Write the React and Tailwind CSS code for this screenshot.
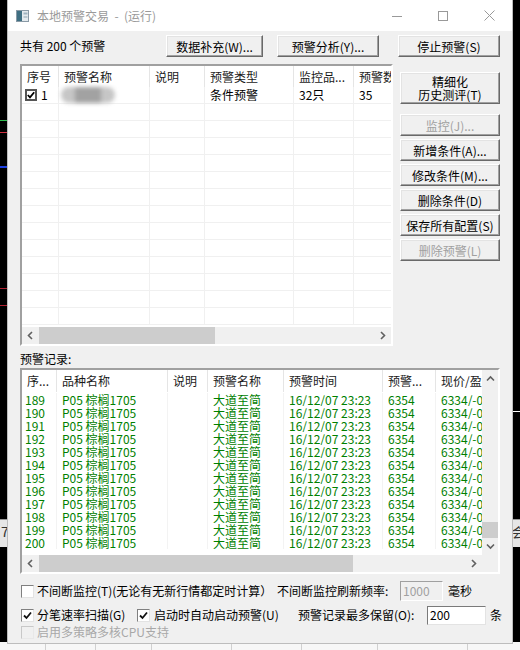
import React from 'react';
import clsx from 'clsx';

const topCols = [
  { label: '序号', w: 'w-[37px]' },
  { label: '预警名称', w: 'w-[91px]' },
  { label: '说明', w: 'w-[55px]' },
  { label: '预警类型', w: 'w-[89px]' },
  { label: '监控品...', w: 'w-[60px]' },
  { label: '预警数量', w: 'w-[60px]' },
];

const logCols = [
  { label: '序...', w: 'w-[35px]', pad: 'pl-[3px]' },
  { label: '品种名称', w: 'w-[111px]', pad: 'pl-[5px]' },
  { label: '说明', w: 'w-[40px]', pad: 'pl-[5px]' },
  { label: '预警名称', w: 'w-[76px]', pad: 'pl-[5px]' },
  { label: '预警时间', w: 'w-[99px]', pad: 'pl-[5px]' },
  { label: '预警...', w: 'w-[53px]', pad: 'pl-[5px]' },
  { label: '现价/盈亏', w: 'w-[80px]', pad: 'pl-[5px]' },
];

const logRows = Array.from({ length: 12 }, (_, i) => [
  String(189 + i),
  'P05 棕榈1705',
  '',
  '大道至简',
  '16/12/07 23:23',
  '6354',
  '6334/-0.31%',
]);

const Arrow = ({ dir }) => {
  const d = {
    left: 'M5 1L1.5 4.5L5 8',
    right: 'M2 1L5.5 4.5L2 8',
    up: 'M1 5.5L4.5 2L8 5.5',
    down: 'M1 1.5L4.5 5L8 1.5',
  }[dir];
  const flat = dir === 'left' || dir === 'right';
  return (
    <svg width={flat ? 7 : 9} height={flat ? 9 : 7} viewBox={flat ? '0 0 7 9' : '0 0 9 7'}>
      <path d={d} fill="none" stroke="#606060" strokeWidth="1.6" />
    </svg>
  );
};

const Btn = ({ children, disabled, className }) => (
  <button
    type="button"
    className={clsx(
      'flex flex-col items-center justify-center shrink-0 bg-[#f0f0f0] text-[12px] leading-[13px] whitespace-nowrap',
      'border border-t-white border-l-white border-r-[#696969] border-b-[#696969] shadow-[inset_-1px_-1px_0_#a0a0a0,inset_1px_1px_0_#e3e3e3]',
      disabled ? 'text-[#a0a0a0]' : 'text-black',
      className
    )}
  >
    {children}
  </button>
);

const Check = ({ checked, disabled }) => (
  <span
    className={clsx(
      'w-[13px] h-[13px] shrink-0 flex items-center justify-center border',
      disabled
        ? 'bg-[#f0f0f0] border-t-[#c8c8c8] border-l-[#c8c8c8] border-r-[#e8e8e8] border-b-[#e8e8e8]'
        : 'bg-white border-t-[#808080] border-l-[#808080] border-r-[#e3e3e3] border-b-[#e3e3e3]'
    )}
  >
    {checked && (
      <svg width="9" height="9" viewBox="0 0 9 9">
        <path d="M1 4.5L3.5 7L8 1.5" fill="none" stroke="#111" strokeWidth="1.8" />
      </svg>
    )}
  </span>
);

const HScroll = ({ thumb, corner }) => (
  <div className="h-[17px] shrink-0 flex bg-[#f0f0f0]">
    <div className="w-[17px] flex items-center justify-center">
      <Arrow dir="left" />
    </div>
    <div className="flex-1 flex items-center">
      <div className={clsx('h-[17px] bg-[#cdcdcd]', thumb)} />
    </div>
    <div className="w-[17px] flex items-center justify-center">
      <Arrow dir="right" />
    </div>
    {corner && <div className="w-[16px] bg-[#f0f0f0]" />}
  </div>
);

const TopList = () => (
  <div className="w-[373px] h-[282px] shrink-0 flex flex-col bg-white border-2 border-t-[#a0a0a0] border-l-[#a0a0a0] border-r-white border-b-white">
    <div className="flex-1 min-h-0 overflow-hidden">
      <div className="h-[21px] flex bg-white">
        {topCols.map((c) => (
          <div
            key={c.label}
            className={clsx(c.w, 'shrink-0 h-full flex items-center pl-[5px] border-r border-[#e5e5e5] whitespace-nowrap overflow-hidden text-[#1a1a1a]')}
          >
            {c.label}
          </div>
        ))}
      </div>
      <div className="h-[17px] flex border-b border-[#f0f0f0]">
        <div className="w-[37px] shrink-0 flex items-center pl-[3px] gap-[4px] border-r border-[#f0f0f0]">
          <span className="w-[12px] h-[12px] flex items-center justify-center border-2 border-[#555] bg-white">
            <svg width="8" height="8" viewBox="0 0 8 8">
              <path d="M0.8 4L3 6.3L7.2 1.2" fill="none" stroke="#000" strokeWidth="1.8" />
            </svg>
          </span>
          <span>1</span>
        </div>
        <div className="w-[91px] shrink-0 flex items-center pl-[2px] border-r border-[#f0f0f0]">
          <div className="w-[54px] h-[16px] rounded-[8px] bg-[#c6c6c6] blur-[2px] flex items-center justify-center">
            <div className="w-[26px] h-[16px] bg-[#a2a2a2]" />
          </div>
        </div>
        <div className="w-[55px] shrink-0 border-r border-[#f0f0f0]" />
        <div className="w-[89px] shrink-0 flex items-center pl-[5px] border-r border-[#f0f0f0]">条件预警</div>
        <div className="w-[60px] shrink-0 flex items-center pl-[5px] border-r border-[#f0f0f0]">32只</div>
        <div className="w-[60px] shrink-0 flex items-center pl-[5px] border-r border-[#f0f0f0]">35</div>
      </div>
      {Array.from({ length: 13 }, (_, r) => (
        <div key={r} className="h-[17px] flex border-b border-[#f0f0f0]">
          {topCols.map((c) => (
            <div key={c.label} className={clsx(c.w, 'shrink-0 border-r border-[#f0f0f0]')} />
          ))}
        </div>
      ))}
    </div>
    <HScroll thumb="w-[176px]" />
  </div>
);

const LogList = () => (
  <div className="w-[480px] h-[206px] shrink-0 flex flex-col bg-white border-2 border-t-[#a0a0a0] border-l-[#a0a0a0] border-r-white border-b-white">
    <div className="flex-1 min-h-0 flex">
      <div className="w-[460px] overflow-hidden">
        <div className="h-[22px] flex bg-white">
          {logCols.map((c) => (
            <div
              key={c.label}
              className={clsx(c.w, 'shrink-0 h-full flex items-center pl-[5px] border-r border-[#e5e5e5] whitespace-nowrap overflow-hidden text-[#1a1a1a]')}
            >
              {c.label}
            </div>
          ))}
        </div>
        <div className="pt-[1px]">
          {logRows.map((row) => (
            <div key={row[0]} className="h-[13px] flex text-[#008000] leading-[13px]">
              {row.map((v, i) => (
                <div
                  key={i}
                  className={clsx(logCols[i].w, logCols[i].pad, 'shrink-0 whitespace-nowrap overflow-hidden border-r border-[#f3f3f3]')}
                >
                  {v}
                </div>
              ))}
            </div>
          ))}
        </div>
      </div>
      <div className="w-[16px] shrink-0 flex flex-col bg-[#f0f0f0]">
        <div className="h-[17px] flex items-center justify-center">
          <Arrow dir="up" />
        </div>
        <div className="flex-1 flex flex-col justify-end">
          <div className="h-[16px] bg-[#cdcdcd]" />
        </div>
        <div className="h-[17px] flex items-center justify-center">
          <Arrow dir="down" />
        </div>
      </div>
    </div>
    <HScroll thumb="w-[314px]" corner />
  </div>
);

const TitleBar = () => (
  <div className="h-[31px] shrink-0 flex items-center bg-white">
    <svg className="ml-[8px]" width="13" height="12" viewBox="0 0 13 12">
      <rect x="0.5" y="0.5" width="12" height="11" fill="#e4eaee" stroke="#8a9aa6" />
      <rect x="1" y="1" width="5" height="10" fill="#3f6f82" />
      <rect x="7.5" y="2.5" width="4" height="2" fill="#9fb3bf" />
      <rect x="7.5" y="6" width="4" height="2" fill="#b9c7cf" />
    </svg>
    <span className="ml-[8px] text-[12px] text-[#9a9a9a] whitespace-pre">本地预警交易  -  (运行)</span>
    <div className="flex-1" />
    <div className="w-[46px] h-full flex items-center justify-center">
      <svg width="10" height="10" viewBox="0 0 10 10">
        <rect x="0" y="5" width="10" height="1" fill="#999" />
      </svg>
    </div>
    <div className="w-[46px] h-full flex items-center justify-center">
      <svg width="10" height="10" viewBox="0 0 10 10">
        <rect x="0.5" y="0.5" width="9" height="9" fill="none" stroke="#999" />
      </svg>
    </div>
    <div className="w-[46px] h-full flex items-center justify-center">
      <svg width="11" height="11" viewBox="0 0 11 11">
        <path d="M0.5 0.5L10.5 10.5M10.5 0.5L0.5 10.5" stroke="#999" strokeWidth="1" />
      </svg>
    </div>
  </div>
);

export default function App() {
  return (
    <div className="relative w-[520px] h-[650px] overflow-hidden bg-black text-[12px] leading-[14px] text-black [font-family:'Noto_Sans_CJK_SC',sans-serif]">
      {/* desktop behind the dialog */}
      <div className="absolute left-0 top-[120px] w-[8px] h-[1px] bg-[#2fbf4f]" />
      <div className="absolute left-0 top-[132px] w-[8px] h-[1px] bg-[#d03040]" />
      <div className="absolute left-0 top-[166px] w-[8px] h-[2px] bg-[#1d3fe0]" />
      <div className="absolute left-0 top-[288px] w-[8px] h-[1px] bg-[#b02030]" />
      <div className="absolute left-0 top-[305px] w-[8px] h-[1px] bg-[#b02030]" />
      <div className="absolute left-0 top-[519px] w-[8px] h-[28px] bg-[#e6e6e6] border-t border-[#999] text-[14px] leading-[16px] text-[#333] pl-[1px] pt-[3px]">7</div>
      <div className="absolute right-0 top-[411px] w-[8px] h-[1px] bg-white" />
      <div className="absolute right-0 top-[519px] w-[8px] h-[28px] bg-[#e6e6e6] border-t border-[#999] text-[13px] leading-[16px] text-[#333] pt-[4px] overflow-hidden">会</div>
      <div className="absolute left-0 bottom-0 w-full h-[8px] flex bg-[#f7f7f7]">
        <div className="w-[46px] border-r border-[#d0d0d0]" />
        <div className="w-[50px] border-r border-[#d0d0d0]" />
        <div className="w-[56px] border-r border-[#d0d0d0]" />
        <div className="w-[80px] border-r border-[#d0d0d0]" />
        <div className="w-[70px] border-r border-[#d0d0d0]" />
        <div className="w-[76px] border-r border-[#d0d0d0]" />
        <div className="w-[90px] border-r border-[#d0d0d0]" />
      </div>

      {/* dialog window */}
      <div className="absolute left-[8px] top-0 w-[504px] h-[643px] flex flex-col bg-[#f0f0f0] shadow-[0_0_0_1px_#bdbdbd]">
        <TitleBar />
        <div className="flex flex-col pl-[12px] pt-[4px]">
          <div className="h-[22px] flex items-center">
            <span className="w-[146px] shrink-0">共有 200 个预警</span>
            <Btn className="w-[97px] h-[22px]">数据补充(W)...</Btn>
            <Btn className="w-[102px] h-[22px] ml-[14px]">预警分析(Y)...</Btn>
            <Btn className="w-[102px] h-[22px] ml-[19px]">停止预警(S)</Btn>
          </div>

          <div className="flex mt-[7px]">
            <TopList />
            <div className="w-[100px] ml-[7px] flex flex-col">
              <Btn className="w-[100px] h-[32px] mt-[8px]">
                <span>精细化</span>
                <span>历史测评(T)</span>
              </Btn>
              <div className="flex flex-col gap-[3px] mt-[10px]">
                <Btn disabled className="w-[100px] h-[22px]">监控(J)...</Btn>
                <Btn className="w-[100px] h-[22px]">新增条件(A)...</Btn>
                <Btn className="w-[100px] h-[22px]">修改条件(M)...</Btn>
                <Btn className="w-[100px] h-[22px]">删除条件(D)</Btn>
                <Btn className="w-[100px] h-[22px]">保存所有配置(S)</Btn>
                <Btn disabled className="w-[100px] h-[22px]">删除预警(L)</Btn>
              </div>
            </div>
          </div>

          <div className="h-[22px] pt-[6px]">预警记录:</div>
          <LogList />

          <div className="h-[20px] mt-[7px] flex items-center">
            <span className="ml-[1px]">
              <Check />
            </span>
            <span className="w-[240px] ml-[3px] shrink-0 whitespace-nowrap">不间断监控(T)(无论有无新行情都定时计算）</span>
            <span className="w-[123px] shrink-0 whitespace-nowrap">不间断监控刷新频率:</span>
            <div className="w-[43px] h-[20px] shrink-0 flex items-center pl-[2px] bg-[#f0f0f0] text-[#a0a0a0] border border-t-[#a0a0a0] border-l-[#a0a0a0] border-r-white border-b-white">
              1000
            </div>
            <span className="ml-[5px]">毫秒</span>
          </div>

          <div className="h-[20px] mt-[4px] flex items-center">
            <span className="ml-[1px]">
              <Check checked />
            </span>
            <span className="w-[100px] ml-[3px] shrink-0 whitespace-nowrap">分笔速率扫描(G)</span>
            <Check checked />
            <span className="w-[144px] ml-[4px] shrink-0 whitespace-nowrap">启动时自动启动预警(U)</span>
            <span className="w-[129px] shrink-0 whitespace-nowrap">预警记录最多保留(O):</span>
            <div className="w-[59px] h-[19px] shrink-0 flex items-center pl-[2px] bg-white border border-t-[#7a7a7a] border-l-[#7a7a7a] border-r-[#e3e3e3] border-b-[#e3e3e3]">
              200
            </div>
            <span className="ml-[4px]">条</span>
          </div>

          <div className="h-[14px] flex items-center">
            <span className="ml-[1px]">
              <Check disabled />
            </span>
            <span className="ml-[3px] text-[#a8a8a8] whitespace-nowrap">启用多策略多核CPU支持</span>
          </div>
        </div>
      </div>
    </div>
  );
}
